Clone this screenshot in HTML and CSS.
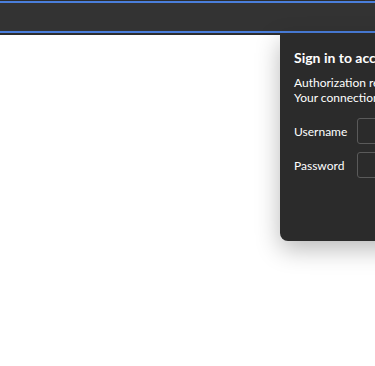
FILE: index.html
```html
<!DOCTYPE html>
<html>
<head>
  <title>Sign in</title>
  <link rel="stylesheet" href="styles.css">
</head>
<body>
  <div class="frame">
    <div class="toolbar"></div>
  </div>
  <div class="page"></div>

  <!-- Sign in dialog, sits over the page -->
  <div class="dialog">
    <h1>Sign in to access this site</h1>
    <p>Authorization required by http://192.168.1.1<br>Your connection to this site is not private</p>
    <div class="row">
      <label>Username</label>
      <input class="field" type="text">
    </div>
    <div class="row">
      <label>Password</label>
      <input class="field" type="password">
    </div>
  </div>
</body>
</html>
```

FILE: styles.css
```css
* {
  box-sizing: border-box;
  margin: 0;
  padding: 0;
}

body {
  width: 375px;
  height: 366px;
  overflow: hidden;
  background-color: white;
  font-family: Lato, "Noto Sans", Arial, sans-serif;
  position: relative;
}

/* top browser strip */
.frame {
  background-color: #2d2d2d;
  padding: 1px 0 2px 0;
}

.toolbar {
  height: 32px;
  background-color: #333333;
  border-top: 2px solid #4a7edb;
  border-bottom: 2px solid #4a7edb;
}

.page {
  height: 300px;
  background-color: white;
}

/* dialog */
.dialog {
  position: absolute;
  top: 34px;
  left: 280px;
  width: 440px;
  height: 207px;
  background-color: #2b2b2b;
  border-radius: 0 0 8px 8px;
  box-shadow: 0 8px 24px rgba(0, 0, 0, 0.28);
  padding: 15px 14px 0 14px;
  color: white;
  overflow: hidden;
}

.dialog h1 {
  font-size: 14px;
  font-weight: bold;
  line-height: 18px;
  margin-bottom: 8px;
}

.dialog p {
  font-size: 12px;
  line-height: 15px;
  margin-bottom: 13px;
}

.row {
  display: flex;
  align-items: center;
  margin-bottom: 8px;
}

.row label {
  width: 63px;
  font-size: 12px;
}

.field {
  width: 200px;
  height: 26px;
  background-color: #2b2b2b;
  border: 1px solid #5a5a5a;
  border-radius: 3px;
}
```
